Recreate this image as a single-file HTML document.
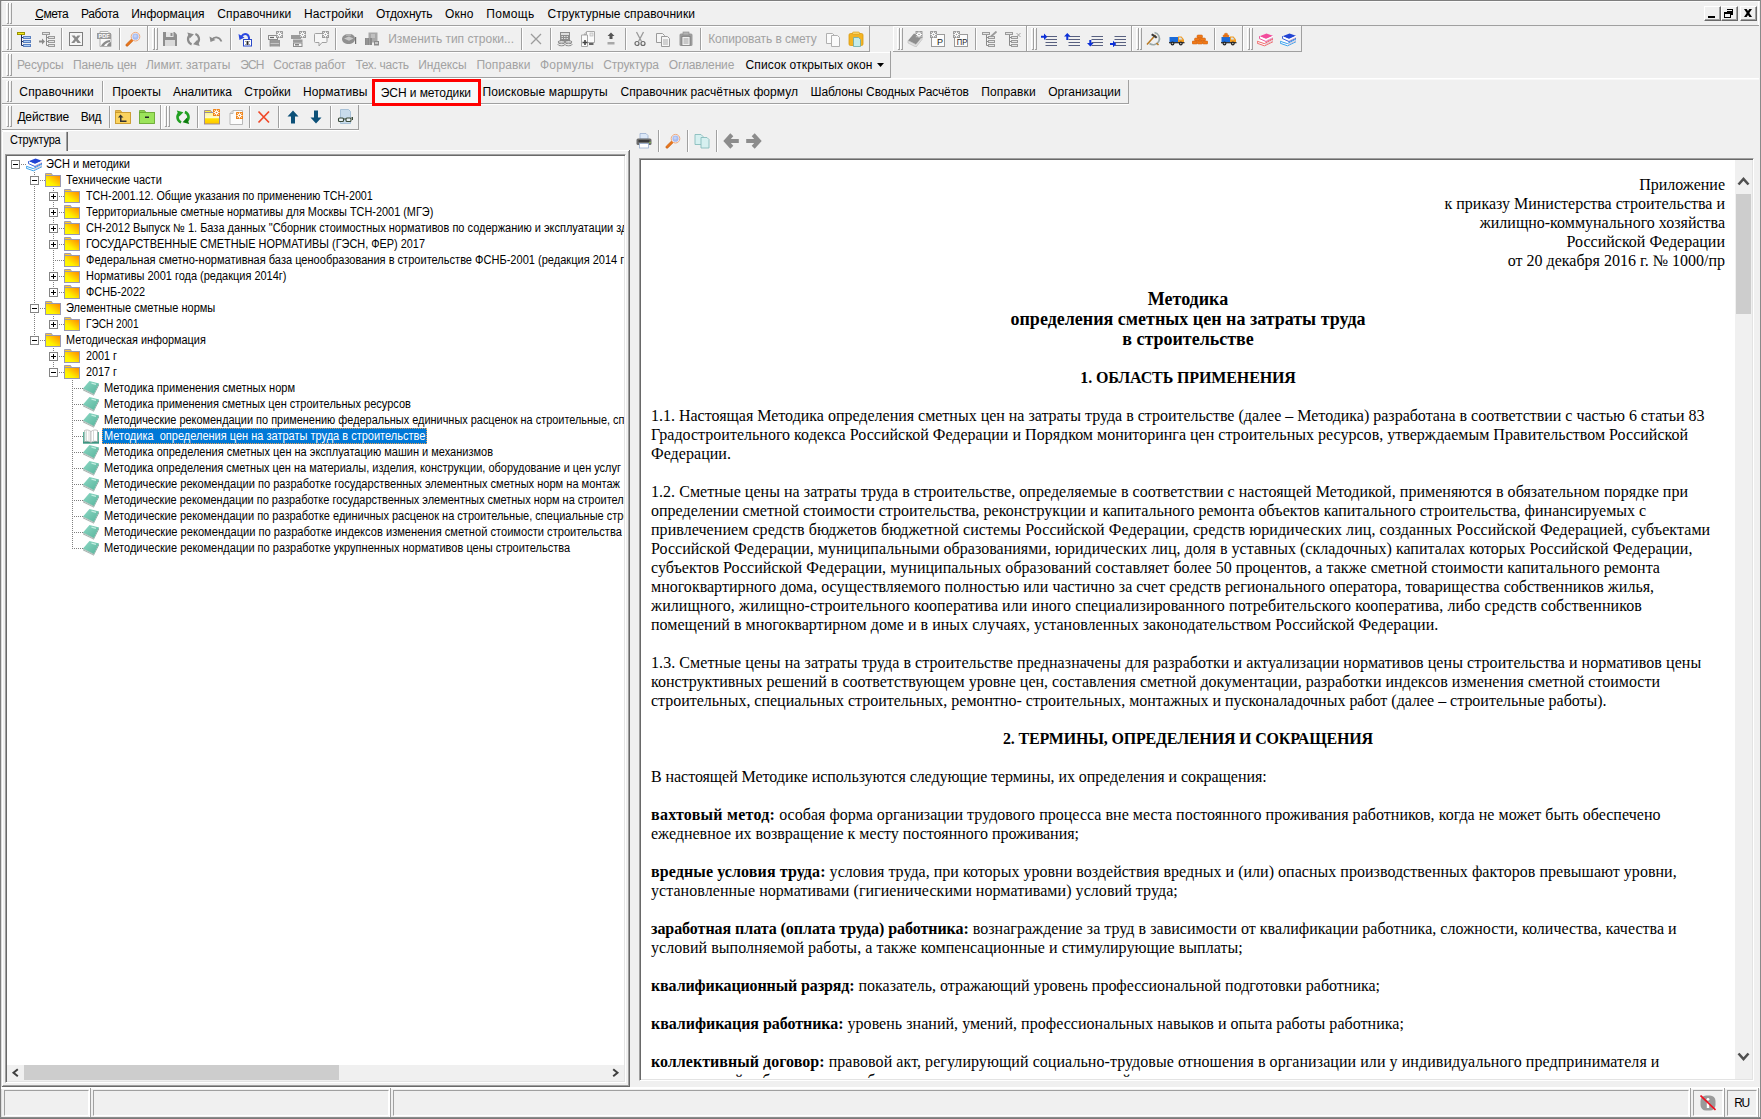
<!DOCTYPE html>
<html lang="ru"><head><meta charset="utf-8"><title>Смета</title><style>
html,body{margin:0;padding:0}
body{width:1761px;height:1119px;background:#f0f0f0;position:relative;overflow:hidden;font-family:"Liberation Sans",sans-serif;font-size:12px;color:#000}
.abs{position:absolute}
.ui{font-family:"Liberation Sans",sans-serif;font-size:12px;line-height:16px;white-space:pre;color:#000}
.dis{color:#a2a2a2}
.tree{font-family:"Liberation Sans",sans-serif;font-size:12px;line-height:16px;white-space:pre;color:#000;transform:scaleX(.917);transform-origin:0 0}
.sel{color:#fff}
.wbtn{width:17px;height:15px;box-sizing:border-box;background:#f0f0f0;border:1px solid;border-color:#fff #696969 #696969 #fff;box-shadow:inset -1px -1px 0 #a0a0a0}
.dv{width:1px;background-image:linear-gradient(#808080 50%,transparent 50%);background-size:1px 2px}
.dh{height:1px;background-image:linear-gradient(90deg,#808080 50%,transparent 50%);background-size:2px 1px}
#body{margin:15px 10px 0 10px;font-family:"Liberation Serif",serif;font-size:16px;line-height:19px;color:#000}
#body p{margin:0 0 19px 0}
#body p.r{text-align:right}
#body p.t{text-align:center;font-weight:bold;font-size:18px;line-height:20px}
#body p.h{text-align:center;font-weight:bold}
#body .ln{display:block;white-space:nowrap}
</style></head><body><svg width="0" height="0" style="position:absolute"><defs><linearGradient id="tf" x1="0" y1="1" x2="1" y2="0"><stop offset="0" stop-color="#ffff00"/><stop offset=".35" stop-color="#fff000"/><stop offset="1" stop-color="#ff8400"/></linearGradient><linearGradient id="tb" x1="0" y1="0" x2="1" y2="1"><stop offset="0" stop-color="#8cd8c4"/><stop offset="1" stop-color="#58b49c"/></linearGradient></defs></svg><div class="abs" style="left:0px;top:0px;width:1761px;height:1px;background:#7e7e7e;"></div><div class="abs" style="left:1px;top:1px;width:1759px;height:1px;background:#fbfbfb;"></div><div class="abs" style="left:0px;top:0px;width:1px;height:1119px;background:#7e7e7e;"></div><div class="abs" style="left:1px;top:1px;width:1px;height:1116px;background:#dcdcdc;"></div><div class="abs" style="left:1760px;top:0px;width:1px;height:1119px;background:#8a8a8a;"></div><div class="abs" style="left:0px;top:1118px;width:1761px;height:1px;background:#7a7a7a;"></div><div class="abs" style="left:0px;top:1117px;width:1761px;height:1px;background:#8c8c8c;"></div><div class="abs" style="left:6px;top:3px;width:1px;height:20px;background:#ffffff;"></div><div class="abs" style="left:8px;top:3px;width:1px;height:21px;background:#a0a0a0;"></div><div class="abs" style="left:6px;top:3px;width:2px;height:1px;background:#ffffff;"></div><div class="abs" style="left:7px;top:23px;width:2px;height:1px;background:#a0a0a0;"></div><div class="abs" style="left:9px;top:3px;width:1px;height:20px;background:#ffffff;"></div><div class="abs" style="left:11px;top:3px;width:1px;height:21px;background:#a0a0a0;"></div><div class="abs" style="left:9px;top:3px;width:2px;height:1px;background:#ffffff;"></div><div class="abs" style="left:10px;top:23px;width:2px;height:1px;background:#a0a0a0;"></div><span class="abs ui" style="left:35.2px;top:6px;letter-spacing:-0.427px;">Смета</span><span class="abs ui" style="left:81.0px;top:6px;letter-spacing:-0.352px;">Работа</span><span class="abs ui" style="left:131.2px;top:6px;letter-spacing:-0.008px;">Информация</span><span class="abs ui" style="left:217.3px;top:6px;letter-spacing:0.127px;">Справочники</span><span class="abs ui" style="left:304.1px;top:6px;letter-spacing:0.051px;">Настройки</span><span class="abs ui" style="left:376.0px;top:6px;letter-spacing:-0.218px;">Отдохнуть</span><span class="abs ui" style="left:445.0px;top:6px;letter-spacing:0.152px;">Окно</span><span class="abs ui" style="left:486.2px;top:6px;letter-spacing:0.323px;">Помощь</span><span class="abs ui" style="left:547.5px;top:6px;letter-spacing:0.085px;">Структурные справочники</span><div class="abs" style="left:35px;top:19px;width:8px;height:1px;background:#000;"></div><div class="abs" style="left:1758px;top:1px;width:1px;height:24px;background:#ffffff;"></div><div class="abs wbtn" style="left:1704px;top:6px"></div><div class="abs wbtn" style="left:1721px;top:6px"></div><div class="abs wbtn" style="left:1740px;top:6px"></div><div class="abs" style="left:1708px;top:16px;width:7px;height:2px;background:#000;"></div><svg class="abs" style="left:1724px;top:9px" width="10" height="10" viewBox="0 0 10 10"><path d="M3 0h6v6H7V3H3zM3 1v1h5V1z" fill="#000" fill-rule="evenodd"/><path d="M0 3h7v6H0zM1 5v3h5V5z" fill="#000" fill-rule="evenodd"/></svg><svg class="abs" style="left:1744px;top:9px" width="8" height="8" viewBox="0 0 8 7" preserveAspectRatio="none"><path d="M0 0h2.600L4 1.800 5.400 0H8L5.300 3.500 8 7H5.400L4 5.200 2.600 7H0L2.700 3.500z" fill="#000"/></svg><div class="abs" style="left:2px;top:25px;width:1757px;height:1px;background:#a0a0a0;"></div><div class="abs" style="left:2px;top:26px;width:145px;height:1px;background:#ffffff;"></div><div class="abs" style="left:2px;top:51px;width:146px;height:1px;background:#a0a0a0;"></div><div class="abs" style="left:147px;top:25px;width:1px;height:27px;background:#a0a0a0;"></div><div class="abs" style="left:2px;top:26px;width:1px;height:25px;background:#ffffff;"></div><div class="abs" style="left:148px;top:26px;width:721px;height:1px;background:#ffffff;"></div><div class="abs" style="left:148px;top:51px;width:722px;height:1px;background:#a0a0a0;"></div><div class="abs" style="left:869px;top:25px;width:1px;height:27px;background:#a0a0a0;"></div><div class="abs" style="left:148px;top:26px;width:1px;height:25px;background:#ffffff;"></div><div class="abs" style="left:893px;top:26px;width:133px;height:1px;background:#ffffff;"></div><div class="abs" style="left:893px;top:51px;width:134px;height:1px;background:#a0a0a0;"></div><div class="abs" style="left:1026px;top:25px;width:1px;height:27px;background:#a0a0a0;"></div><div class="abs" style="left:893px;top:26px;width:1px;height:25px;background:#ffffff;"></div><div class="abs" style="left:1027px;top:26px;width:104px;height:1px;background:#ffffff;"></div><div class="abs" style="left:1027px;top:51px;width:105px;height:1px;background:#a0a0a0;"></div><div class="abs" style="left:1131px;top:25px;width:1px;height:27px;background:#a0a0a0;"></div><div class="abs" style="left:1027px;top:26px;width:1px;height:25px;background:#ffffff;"></div><div class="abs" style="left:1132px;top:26px;width:110px;height:1px;background:#ffffff;"></div><div class="abs" style="left:1132px;top:51px;width:111px;height:1px;background:#a0a0a0;"></div><div class="abs" style="left:1242px;top:25px;width:1px;height:27px;background:#a0a0a0;"></div><div class="abs" style="left:1132px;top:26px;width:1px;height:25px;background:#ffffff;"></div><div class="abs" style="left:1243px;top:26px;width:58px;height:1px;background:#ffffff;"></div><div class="abs" style="left:1243px;top:51px;width:59px;height:1px;background:#a0a0a0;"></div><div class="abs" style="left:1301px;top:25px;width:1px;height:27px;background:#a0a0a0;"></div><div class="abs" style="left:1243px;top:26px;width:1px;height:25px;background:#ffffff;"></div><div class="abs" style="left:6px;top:28px;width:1px;height:21px;background:#ffffff;"></div><div class="abs" style="left:8px;top:28px;width:1px;height:22px;background:#a0a0a0;"></div><div class="abs" style="left:6px;top:28px;width:2px;height:1px;background:#ffffff;"></div><div class="abs" style="left:7px;top:49px;width:2px;height:1px;background:#a0a0a0;"></div><div class="abs" style="left:9px;top:28px;width:1px;height:21px;background:#ffffff;"></div><div class="abs" style="left:11px;top:28px;width:1px;height:22px;background:#a0a0a0;"></div><div class="abs" style="left:9px;top:28px;width:2px;height:1px;background:#ffffff;"></div><div class="abs" style="left:10px;top:49px;width:2px;height:1px;background:#a0a0a0;"></div><div class="abs" style="left:152px;top:28px;width:1px;height:21px;background:#ffffff;"></div><div class="abs" style="left:154px;top:28px;width:1px;height:22px;background:#a0a0a0;"></div><div class="abs" style="left:152px;top:28px;width:2px;height:1px;background:#ffffff;"></div><div class="abs" style="left:153px;top:49px;width:2px;height:1px;background:#a0a0a0;"></div><div class="abs" style="left:155px;top:28px;width:1px;height:21px;background:#ffffff;"></div><div class="abs" style="left:157px;top:28px;width:1px;height:22px;background:#a0a0a0;"></div><div class="abs" style="left:155px;top:28px;width:2px;height:1px;background:#ffffff;"></div><div class="abs" style="left:156px;top:49px;width:2px;height:1px;background:#a0a0a0;"></div><div class="abs" style="left:897px;top:28px;width:1px;height:21px;background:#ffffff;"></div><div class="abs" style="left:899px;top:28px;width:1px;height:22px;background:#a0a0a0;"></div><div class="abs" style="left:897px;top:28px;width:2px;height:1px;background:#ffffff;"></div><div class="abs" style="left:898px;top:49px;width:2px;height:1px;background:#a0a0a0;"></div><div class="abs" style="left:900px;top:28px;width:1px;height:21px;background:#ffffff;"></div><div class="abs" style="left:902px;top:28px;width:1px;height:22px;background:#a0a0a0;"></div><div class="abs" style="left:900px;top:28px;width:2px;height:1px;background:#ffffff;"></div><div class="abs" style="left:901px;top:49px;width:2px;height:1px;background:#a0a0a0;"></div><div class="abs" style="left:1031px;top:28px;width:1px;height:21px;background:#ffffff;"></div><div class="abs" style="left:1033px;top:28px;width:1px;height:22px;background:#a0a0a0;"></div><div class="abs" style="left:1031px;top:28px;width:2px;height:1px;background:#ffffff;"></div><div class="abs" style="left:1032px;top:49px;width:2px;height:1px;background:#a0a0a0;"></div><div class="abs" style="left:1034px;top:28px;width:1px;height:21px;background:#ffffff;"></div><div class="abs" style="left:1036px;top:28px;width:1px;height:22px;background:#a0a0a0;"></div><div class="abs" style="left:1034px;top:28px;width:2px;height:1px;background:#ffffff;"></div><div class="abs" style="left:1035px;top:49px;width:2px;height:1px;background:#a0a0a0;"></div><div class="abs" style="left:1136px;top:28px;width:1px;height:21px;background:#ffffff;"></div><div class="abs" style="left:1138px;top:28px;width:1px;height:22px;background:#a0a0a0;"></div><div class="abs" style="left:1136px;top:28px;width:2px;height:1px;background:#ffffff;"></div><div class="abs" style="left:1137px;top:49px;width:2px;height:1px;background:#a0a0a0;"></div><div class="abs" style="left:1139px;top:28px;width:1px;height:21px;background:#ffffff;"></div><div class="abs" style="left:1141px;top:28px;width:1px;height:22px;background:#a0a0a0;"></div><div class="abs" style="left:1139px;top:28px;width:2px;height:1px;background:#ffffff;"></div><div class="abs" style="left:1140px;top:49px;width:2px;height:1px;background:#a0a0a0;"></div><div class="abs" style="left:1247px;top:28px;width:1px;height:21px;background:#ffffff;"></div><div class="abs" style="left:1249px;top:28px;width:1px;height:22px;background:#a0a0a0;"></div><div class="abs" style="left:1247px;top:28px;width:2px;height:1px;background:#ffffff;"></div><div class="abs" style="left:1248px;top:49px;width:2px;height:1px;background:#a0a0a0;"></div><div class="abs" style="left:1250px;top:28px;width:1px;height:21px;background:#ffffff;"></div><div class="abs" style="left:1252px;top:28px;width:1px;height:22px;background:#a0a0a0;"></div><div class="abs" style="left:1250px;top:28px;width:2px;height:1px;background:#ffffff;"></div><div class="abs" style="left:1251px;top:49px;width:2px;height:1px;background:#a0a0a0;"></div><svg class="abs" style="left:17px;top:31px" width="16" height="16" viewBox="0 0 16 16"><rect x="0.5" y="1.5" width="7" height="2" fill="#f4ec1c" stroke="#9a9400"/>
<path d="M4.5 4V14.5H7M4.5 6.5H7M4.5 10.5H7" fill="none" stroke="#1f2f5f"/>
<rect x="6.5" y="5.5" width="7" height="2" fill="#a9cdf5" stroke="#5a80c0"/><rect x="6.5" y="9.5" width="7" height="2" fill="#a9cdf5" stroke="#5a80c0"/><rect x="6.5" y="13.5" width="7" height="2" fill="#a9cdf5" stroke="#5a80c0"/></svg><svg class="abs" style="left:39px;top:31px" width="16" height="16" viewBox="0 0 16 16"><rect x="3.5" y="1.5" width="7" height="2" fill="#e4e4e4" stroke="#9a9a9a"/>
<path d="M7.5 4V14.5H10M7.5 6.5H10M7.5 10.5H10" fill="none" stroke="#8a8a8a"/>
<rect x="9.5" y="5.5" width="6" height="2" fill="#e4e4e4" stroke="#9a9a9a"/><rect x="9.5" y="9.5" width="6" height="2" fill="#e4e4e4" stroke="#9a9a9a"/><rect x="9.5" y="13.5" width="6" height="2" fill="#e4e4e4" stroke="#9a9a9a"/>
<path d="M0 9.5h3v-2l3 3-3 3v-2H0z" fill="#8a8a8a"/></svg><div class="abs" style="left:61px;top:28px;width:1px;height:22px;background:#a0a0a0;"></div><div class="abs" style="left:62px;top:28px;width:1px;height:22px;background:#ffffff;"></div><svg class="abs" style="left:68px;top:31px" width="16" height="16" viewBox="0 0 16 16"><rect x="1.500" y="1.500" width="13" height="13" fill="#f6f6f6" stroke="#7e7e7e" stroke-width="1"/>
<path d="M3.500 4.500h3.200L8 6.300 9.500 4.500h3L9.700 8l3.300 4H9.500L8 9.800 6.300 12H3.200L6.500 8z" fill="#8a8a8a"/></svg><div class="abs" style="left:90px;top:28px;width:1px;height:22px;background:#a0a0a0;"></div><div class="abs" style="left:91px;top:28px;width:1px;height:22px;background:#ffffff;"></div><svg class="abs" style="left:97px;top:31px" width="16" height="16" viewBox="0 0 16 16"><path d="M3 0.5h8l3 3V15.5H3z" fill="#fafafa" stroke="#b0b0b0"/><rect x="0" y="2" width="14" height="6" fill="#9a9a9a"/>
<text x="7" y="7" font-family="Liberation Sans" font-weight="bold" font-size="5.5" fill="#fff" text-anchor="middle">PDF</text>
<path d="M4 15c2-4 5-5.5 9-6v2c-3 .5-5 2-6 4zM10 15c.5-2 2-3.5 4-4v4z" fill="#8c8c8c"/></svg><div class="abs" style="left:119px;top:28px;width:1px;height:22px;background:#a0a0a0;"></div><div class="abs" style="left:120px;top:28px;width:1px;height:22px;background:#ffffff;"></div><svg class="abs" style="left:125px;top:31px" width="16" height="16" viewBox="0 0 16 16"><path d="M1.2 13.2 7 7.6 8.6 9.2 2.9 14.9a1.2 1.2 0 0 1-1.7-1.7z" fill="#e8761c" stroke="#c05a10" stroke-width=".6"/>
<circle cx="10.5" cy="5.7" r="4.3" fill="#eef2fc" stroke="#f0a878" stroke-width="1"/><circle cx="10.5" cy="5.7" r="3.100" fill="#a8bcf0"/><circle cx="10.200" cy="5" r="1.600" fill="#c4d2f6"/></svg><svg class="abs" style="left:162px;top:31px" width="16" height="16" viewBox="0 0 16 16"><path d="M1 1h11.5L15 3.5V15H1z" fill="#8e8e8e"/><rect x="4" y="1" width="7.5" height="5" fill="#e6e6e6"/><rect x="8.5" y="2" width="2" height="3" fill="#8e8e8e"/><rect x="3" y="9" width="10" height="6" fill="#dadada"/></svg><svg class="abs" style="left:185px;top:31px" width="16" height="16" viewBox="0 0 16 16"><g transform="translate(.5 0)"><path d="M6.12 13.37A5.5 5.5 0 0 1 4.18 4.24" fill="none" stroke="#8c8c8c" stroke-width="2.2"/><path d="M1.800 1.400 8.400 3.200 4.200 7.600z" fill="#8c8c8c"/><g transform="rotate(180 8 8.2)"><path d="M6.12 13.37A5.5 5.5 0 0 1 4.18 4.24" fill="none" stroke="#8c8c8c" stroke-width="2.2"/><path d="M1.800 1.400 8.400 3.200 4.200 7.600z" fill="#8c8c8c"/></g></g></svg><svg class="abs" style="left:208px;top:31px" width="16" height="16" viewBox="0 0 16 16"><path d="M4 8.5C6 5.5 11 5 13.5 10.5" fill="none" stroke="#8c8c8c" stroke-width="1.8"/><path d="M1.5 5.5 2.5 11 7.5 9z" fill="#8c8c8c"/></svg><div class="abs" style="left:230px;top:28px;width:1px;height:22px;background:#a0a0a0;"></div><div class="abs" style="left:231px;top:28px;width:1px;height:22px;background:#ffffff;"></div><svg class="abs" style="left:238px;top:31px" width="16" height="16" viewBox="0 0 16 16"><path d="M3.5 5.5C6 1.5 11.5 2.5 11 8.5" fill="none" stroke="#2a48e0" stroke-width="2"/><path d="M0.5 3 1.5 9 6.5 6.5z" fill="#2a48e0"/>
<rect x="5.5" y="8.500" width="8" height="6.500" fill="#fff" stroke="#2a48c8"/><path d="M7.5 10 11.5 14M11.5 10 7.500 14M9.500 10v4" stroke="#222" stroke-width=".9"/></svg><div class="abs" style="left:260px;top:28px;width:1px;height:22px;background:#a0a0a0;"></div><div class="abs" style="left:261px;top:28px;width:1px;height:22px;background:#ffffff;"></div><svg class="abs" style="left:267px;top:31px" width="16" height="16" viewBox="0 0 16 16"><rect x="1.500" y="4.500" width="9" height="4" fill="#f4f4f4" stroke="#8c8c8c"/><path d="M3 6.500h4" stroke="#666" stroke-width="1.200"/><rect x="3" y="9" width="9.500" height="3" fill="#9a9a9a"/><rect x="3" y="12.500" width="9.500" height="3" fill="#9a9a9a"/><path d="M3 9v6.500M12.500 9v6.500" stroke="#8a8a8a" stroke-width=".8"/><rect x="9.0" y="0.0" width="7" height="7" rx=".6" fill="#9a9a9a"/><path d="M9.5 3.5h6M12.5 0.5v6M10.3 1.2999999999999998l4.400 4.400M14.7 1.2999999999999998l-4.400 4.400" stroke="#fff" stroke-width=".9"/><circle cx="12.5" cy="3.5" r="1.900" fill="#fff"/><circle cx="12.5" cy="3.5" r=".8" fill="#9a9a9a"/></svg><svg class="abs" style="left:290px;top:31px" width="16" height="16" viewBox="0 0 16 16"><rect x="1" y="4" width="10" height="4" fill="#9a9a9a"/><rect x="3" y="8.500" width="9.500" height="3" fill="#9a9a9a"/><rect x="3.500" y="12" width="8.500" height="3.500" fill="#f4f4f4" stroke="#8c8c8c"/><path d="M5 13.800h4" stroke="#666" stroke-width="1.200"/><rect x="9.0" y="0.0" width="7" height="7" rx=".6" fill="#9a9a9a"/><path d="M9.5 3.5h6M12.5 0.5v6M10.3 1.2999999999999998l4.400 4.400M14.7 1.2999999999999998l-4.400 4.400" stroke="#fff" stroke-width=".9"/><circle cx="12.5" cy="3.5" r="1.900" fill="#fff"/><circle cx="12.5" cy="3.5" r=".8" fill="#9a9a9a"/></svg><svg class="abs" style="left:313px;top:31px" width="16" height="16" viewBox="0 0 16 16"><path d="M2.500 2.500h10.500a1 1 0 0 1 1 1V10.500a1 1 0 0 1-1 1H9L6 15V11.500H2.500a1 1 0 0 1-1-1V3.500a1 1 0 0 1 1-1z" fill="#f6f6f6" stroke="#a0a0a0" stroke-linejoin="round"/><rect x="9.0" y="0.0" width="7" height="7" rx=".6" fill="#9a9a9a"/><path d="M9.5 3.5h6M12.5 0.5v6M10.3 1.2999999999999998l4.400 4.400M14.7 1.2999999999999998l-4.400 4.400" stroke="#fff" stroke-width=".9"/><circle cx="12.5" cy="3.5" r="1.900" fill="#fff"/><circle cx="12.5" cy="3.5" r=".8" fill="#9a9a9a"/></svg><div class="abs" style="left:335px;top:28px;width:1px;height:22px;background:#a0a0a0;"></div><div class="abs" style="left:336px;top:28px;width:1px;height:22px;background:#ffffff;"></div><svg class="abs" style="left:341px;top:31px" width="16" height="16" viewBox="0 0 16 16"><path d="M1 8c0-3 3-5 7-5s6 2 6 5-3 5-6.500 5S1 11 1 8z" fill="#909090"/><path d="M3 7.500 8 5.500l4.500 2L8 9.800z" fill="#c8c8c8"/><rect x="5" y="3" width="5" height="2" fill="#b0b0b0"/><rect x="14" y="6" width="1.200" height="7" fill="#707070"/></svg><svg class="abs" style="left:364px;top:31px" width="16" height="16" viewBox="0 0 16 16"><rect x="4.500" y="1.500" width="9" height="10" fill="#a8a8a8"/><path d="M7 4h4M7 6h4" stroke="#d8d8d8"/><rect x="1" y="7" width="7" height="7" fill="#8a8a8a"/><path d="M3 7v7M5.500 7v7" stroke="#a8a8a8" stroke-width=".7"/><rect x="10" y="10" width="5" height="4.500" fill="#8a8a8a"/><rect x="11" y="11" width="3" height="2" fill="#c8c8c8"/></svg><div class="abs" style="left:521px;top:28px;width:1px;height:22px;background:#a0a0a0;"></div><div class="abs" style="left:522px;top:28px;width:1px;height:22px;background:#ffffff;"></div><svg class="abs" style="left:528px;top:31px" width="16" height="16" viewBox="0 0 16 16"><path d="M3 3 13 13M13 3 3 13" stroke="#9c9c9c" stroke-width="1.300"/></svg><div class="abs" style="left:550px;top:28px;width:1px;height:22px;background:#a0a0a0;"></div><div class="abs" style="left:551px;top:28px;width:1px;height:22px;background:#ffffff;"></div><svg class="abs" style="left:557px;top:31px" width="16" height="16" viewBox="0 0 16 16"><rect x="3" y="1" width="10" height="9" fill="#8c8c8c"/><rect x="4" y="2" width="8" height="2" fill="#ddd"/><path d="M4.500 5.500h7M4.500 7.500h7" stroke="#ddd" stroke-dasharray="1.500 1"/>
<ellipse cx="4.500" cy="11" rx="3.500" ry="1.300" fill="#e8e8e8" stroke="#777" stroke-width=".8"/><ellipse cx="4.500" cy="13.500" rx="3.500" ry="1.300" fill="#e8e8e8" stroke="#777" stroke-width=".8"/><ellipse cx="11.500" cy="11" rx="3.500" ry="1.300" fill="#e8e8e8" stroke="#777" stroke-width=".8"/><ellipse cx="11.500" cy="13.500" rx="3.500" ry="1.300" fill="#e8e8e8" stroke="#777" stroke-width=".8"/></svg><svg class="abs" style="left:580px;top:31px" width="16" height="16" viewBox="0 0 16 16"><path d="M6.500 0.500h8v11h-8z" fill="#fafafa" stroke="#a8a8a8"/><path d="M4 3.500 6.500 1v2.500zM1.500 4h6v11.500h-6z" fill="#fafafa" stroke="#a8a8a8"/><rect x="10" y="2" width="3" height="3" fill="#e8e8e8" stroke="#b0b0b0" stroke-width=".6"/>
<path d="M2.500 11.500h5M5 9v5" stroke="#444" stroke-width="1.600"/><path d="M9 13h4.500" stroke="#444" stroke-width="1.600"/></svg><svg class="abs" style="left:603px;top:31px" width="16" height="16" viewBox="0 0 16 16"><path d="M8 1.500 11.500 5H9.500V8h-3V5H4.500z" fill="#555"/><rect x="4.500" y="11" width="7" height="2.500" fill="#a8a8a8"/></svg><div class="abs" style="left:625px;top:28px;width:1px;height:22px;background:#a0a0a0;"></div><div class="abs" style="left:626px;top:28px;width:1px;height:22px;background:#ffffff;"></div><svg class="abs" style="left:632px;top:31px" width="16" height="16" viewBox="0 0 16 16"><path d="M4.500 1 9.500 10.500M11.500 1 6.500 10.500" stroke="#9a9a9a" stroke-width="1.300"/><circle cx="5" cy="12.500" r="2" fill="none" stroke="#6a6a6a" stroke-width="1.200"/><circle cx="11" cy="12.500" r="2" fill="none" stroke="#6a6a6a" stroke-width="1.200"/></svg><svg class="abs" style="left:655px;top:31px" width="16" height="16" viewBox="0 0 16 16"><path d="M1.500 2.500h6l2 2v7h-8z" fill="#f6f6f6" stroke="#9a9a9a"/><path d="M6.500 5.500h6l2 2V15.500h-8z" fill="#f6f6f6" stroke="#9a9a9a"/><path d="M8 9h5M8 11h5M8 13h5" stroke="#9a9a9a" stroke-width=".8"/></svg><svg class="abs" style="left:678px;top:31px" width="16" height="16" viewBox="0 0 16 16"><rect x="1.500" y="2.500" width="13" height="12.500" rx="1.500" fill="#9c9c9c"/><rect x="5" y="1" width="6" height="3" fill="#b4b4b4" stroke="#888" stroke-width=".6"/><rect x="4" y="5.500" width="8" height="9" fill="#f0f0f0" stroke="#777" stroke-width=".7"/><path d="M5.500 8h5M5.500 10h5M5.500 12h5" stroke="#8c8c8c" stroke-width=".8"/></svg><div class="abs" style="left:700px;top:28px;width:1px;height:22px;background:#a0a0a0;"></div><div class="abs" style="left:701px;top:28px;width:1px;height:22px;background:#ffffff;"></div><svg class="abs" style="left:825px;top:31px" width="16" height="16" viewBox="0 0 16 16"><path d="M1.500 2.500h6l2 2v8h-8z" fill="#fbfbfb" stroke="#b0b0b0"/><path d="M6.500 4.500h6l2 2V15.500h-8z" fill="#fbfbfb" stroke="#b0b0b0"/></svg><svg class="abs" style="left:848px;top:31px" width="16" height="16" viewBox="0 0 16 16"><rect x="1" y="2.500" width="14" height="12" rx="1.500" fill="#f3b424" stroke="#d89a10" stroke-width=".8"/><rect x="4.500" y="1" width="7" height="2.500" rx="1" fill="#f8d060" stroke="#d89a10" stroke-width=".6"/><path d="M5.500 6.500h5l2 2V15.500h-7z" fill="#c4ecec" stroke="#6aa8a8" stroke-width=".8"/></svg><svg class="abs" style="left:907px;top:31px" width="16" height="16" viewBox="0 0 16 16"><path d="M1 9.500 7 2.500l8 3.500-6 7.500z" fill="#8e8e8e"/><path d="M1 9.500v2.500l8 4 6-7.500V6L9 13.500z" fill="#e2e2e2" stroke="#aaa" stroke-width=".5"/><rect x="8.5" y="0.0" width="7" height="7" rx=".6" fill="#9a9a9a"/><path d="M9 3.5h6M12 0.5v6M9.8 1.2999999999999998l4.400 4.400M14.2 1.2999999999999998l-4.400 4.400" stroke="#fff" stroke-width=".9"/><circle cx="12" cy="3.5" r="1.900" fill="#fff"/><circle cx="12" cy="3.5" r=".8" fill="#9a9a9a"/></svg><svg class="abs" style="left:930px;top:31px" width="16" height="16" viewBox="0 0 16 16"><rect x="1.500" y="3.500" width="13" height="12" fill="#fcfcfc" stroke="#9a9a9a"/><rect x="0.0" y="0.0" width="7" height="7" rx=".6" fill="#9a9a9a"/><path d="M0.5 3.5h6M3.5 0.5v6M1.2999999999999998 1.2999999999999998l4.400 4.400M5.7 1.2999999999999998l-4.400 4.400" stroke="#fff" stroke-width=".9"/><circle cx="3.5" cy="3.5" r="1.900" fill="#fff"/><circle cx="3.5" cy="3.5" r=".8" fill="#9a9a9a"/><text x="10" y="14" font-family="Liberation Sans" font-size="9" fill="#1a1a1a" text-anchor="middle">Р</text></svg><svg class="abs" style="left:953px;top:31px" width="16" height="16" viewBox="0 0 16 16"><rect x="1.500" y="3.500" width="13" height="12" fill="#fcfcfc" stroke="#9a9a9a"/><rect x="0.0" y="0.0" width="7" height="7" rx=".6" fill="#9a9a9a"/><path d="M0.5 3.5h6M3.5 0.5v6M1.2999999999999998 1.2999999999999998l4.400 4.400M5.7 1.2999999999999998l-4.400 4.400" stroke="#fff" stroke-width=".9"/><circle cx="3.5" cy="3.5" r="1.900" fill="#fff"/><circle cx="3.5" cy="3.5" r=".8" fill="#9a9a9a"/><text x="9" y="14" font-family="Liberation Sans" font-size="9" fill="#1a1a1a" text-anchor="middle" textLength="10.500" lengthAdjust="spacingAndGlyphs">ПР</text></svg><div class="abs" style="left:975px;top:28px;width:1px;height:22px;background:#a0a0a0;"></div><div class="abs" style="left:976px;top:28px;width:1px;height:22px;background:#ffffff;"></div><svg class="abs" style="left:982px;top:31px" width="16" height="16" viewBox="0 0 16 16"><rect x="0.500" y="1.500" width="7" height="2" fill="#e4e4e4" stroke="#9a9a9a"/><path d="M4.500 4V14.500H7M4.500 6.500H7M4.500 10.500H7" fill="none" stroke="#8a8a8a"/>
<rect x="6.500" y="5.500" width="6" height="2" fill="#e4e4e4" stroke="#9a9a9a"/><rect x="6.500" y="9.500" width="6" height="2" fill="#e4e4e4" stroke="#9a9a9a"/><rect x="6.500" y="13.500" width="6" height="2" fill="#e4e4e4" stroke="#9a9a9a"/><path d="M9 5.500 14.500 0.500" stroke="#9a9a9a" stroke-width="1.800"/></svg><svg class="abs" style="left:1005px;top:31px" width="16" height="16" viewBox="0 0 16 16"><rect x="0.500" y="1.500" width="7" height="2" fill="#e4e4e4" stroke="#9a9a9a"/><path d="M4.500 4V14.500H7M4.500 6.500H7M4.500 10.500H7" fill="none" stroke="#8a8a8a"/>
<rect x="6.500" y="5.500" width="6" height="2" fill="#e4e4e4" stroke="#9a9a9a"/><rect x="6.500" y="9.500" width="6" height="2" fill="#e4e4e4" stroke="#9a9a9a"/><rect x="6.500" y="13.500" width="6" height="2" fill="#e4e4e4" stroke="#9a9a9a"/><path d="M11.500 2 15.500 6M15.500 2 11.500 6" stroke="#9a9a9a" stroke-width=".9"/></svg><svg class="abs" style="left:1041px;top:31px" width="16" height="16" viewBox="0 0 16 16"><path d="M4.500 5.500h11.500M4.500 8.500h11.500M4.500 11.500h11.500M4.500 14.500h11.500" stroke="#586080" stroke-width="1"/><path d="M0 4.800h3v-2.300l3.300 3.300-3.300 3.300v-2.300h-3z" fill="#0c30d8"/></svg><svg class="abs" style="left:1064px;top:31px" width="16" height="16" viewBox="0 0 16 16"><path d="M4.500 5.500h11.500M4.500 8.500h11.500M4.500 11.500h11.500M4.500 14.500h11.500" stroke="#586080" stroke-width="1"/><path d="M2.300 9v-3.500h-2.300l3.300-3.500 3.300 3.500h-2.300v3.500z" fill="#0c30d8"/></svg><svg class="abs" style="left:1087px;top:31px" width="16" height="16" viewBox="0 0 16 16"><path d="M4.500 5.500h11.500M4.500 8.500h11.500M4.500 11.500h11.500M4.500 14.500h11.500" stroke="#586080" stroke-width="1"/><path d="M2.300 9v3h-2.300l3.300 3.500 3.300-3.500h-2.300v-3z" fill="#0c30d8"/></svg><svg class="abs" style="left:1110px;top:31px" width="16" height="16" viewBox="0 0 16 16"><path d="M4.500 5.500h11.500M4.500 8.500h11.500M4.500 11.500h11.500M4.500 14.500h11.500" stroke="#586080" stroke-width="1"/><path d="M0 12h3v-2.300l3.300 3.300-3.300 3.300v-2.300h-3z" fill="#0c30d8"/></svg><svg class="abs" style="left:1146px;top:31px" width="16" height="16" viewBox="0 0 16 16"><path d="M8.500 1.500A6.200 6.200 0 1 1 3.500 12.500" fill="none" stroke="#9aa8a8" stroke-width="1.600"/><path d="M1 13.500 9.500 4" stroke="#b87820" stroke-width="1.500"/><path d="M6.500 2.500 11.500 6 10 7.500 5 4z" fill="#3a3a3a"/><path d="M12.500 14 10.500 12" stroke="#b87820" stroke-width="1.500"/></svg><svg class="abs" style="left:1169px;top:31px" width="16" height="16" viewBox="0 0 16 16"><path d="M0.500 6h8.500v5.500H0.500z" fill="#1a6ad8"/><path d="M9 5.500h3.500l2.500 3v3H9z" fill="#f09a20"/><path d="M10 6.500h2l1.500 2H10z" fill="#cfe4f8"/><rect x="0" y="11" width="15.500" height="1.300" fill="#333"/><circle cx="3.500" cy="12.500" r="1.900" fill="#222"/><circle cx="11.800" cy="12.500" r="1.900" fill="#222"/><circle cx="3.500" cy="12.500" r=".8" fill="#bbb"/><circle cx="11.800" cy="12.500" r=".8" fill="#bbb"/></svg><svg class="abs" style="left:1192px;top:31px" width="16" height="16" viewBox="0 0 16 16"><g fill="#f07a18" stroke="#c85a08" stroke-width=".5"><rect x="5" y="4" width="5.500" height="3" rx="1"/><rect x="2.500" y="7" width="5.500" height="3" rx="1"/><rect x="8" y="7" width="5.500" height="3" rx="1"/><rect x="0" y="10" width="5.300" height="3" rx="1"/><rect x="5.300" y="10" width="5.300" height="3" rx="1"/><rect x="10.600" y="10" width="5.300" height="3" rx="1"/></g></svg><div class="abs" style="left:1214px;top:28px;width:1px;height:22px;background:#a0a0a0;"></div><div class="abs" style="left:1215px;top:28px;width:1px;height:22px;background:#ffffff;"></div><svg class="abs" style="left:1221px;top:31px" width="16" height="16" viewBox="0 0 16 16"><path d="M0.500 6h8.500v5.500H0.500z" fill="#1a6ad8"/><path d="M9 5.500h3.500l2.500 3v3H9z" fill="#f09a20"/><path d="M10 6.500h2l1.500 2H10z" fill="#cfe4f8"/><rect x="0" y="11" width="15.500" height="1.300" fill="#333"/><circle cx="3.500" cy="12.500" r="1.900" fill="#222"/><circle cx="11.800" cy="12.500" r="1.900" fill="#222"/><circle cx="3.500" cy="12.500" r=".8" fill="#bbb"/><circle cx="11.800" cy="12.500" r=".8" fill="#bbb"/><g fill="#f07a18" stroke="#c85a08" stroke-width=".4"><rect x="2" y="4" width="3" height="2" rx=".8"/><rect x="5" y="4" width="3" height="2" rx=".8"/><rect x="3.500" y="2.300" width="3" height="2" rx=".8"/></g></svg><svg class="abs" style="left:1257px;top:31px" width="16" height="16" viewBox="0 0 16 16"><path d="M0.300 10.300 4 8.300 10 10.800 16.200 8v2.600L7.500 14.800 0.300 12.300z" fill="#fdfdff"/><path d="M0.300 10.300 7.300 12.600 16.200 8M0.300 10.300v2L7.500 14.800 16.200 10.600V8" fill="none" stroke="#f06868" stroke-width="1"/><path d="M8 13.500 16 9.700" stroke="#d8b8c8" stroke-width=".9"/>
<path d="M2.500 5.200 9.500 2.600 16 4.800 9 8z" fill="#f24c9c"/><path d="M2.500 5.200 9 8 16 4.800V7.200L9 10.500 2.500 7.600z" fill="#fff"/><path d="M2.500 5.200V7.600L9 10.500 16 7.200" fill="none" stroke="#e84890" stroke-width=".9"/><path d="M9.500 9.600 16 6.500" stroke="#d8b8c8" stroke-width=".8"/></svg><svg class="abs" style="left:1280px;top:31px" width="16" height="16" viewBox="0 0 16 16"><path d="M0.300 10.300 4 8.300 10 10.800 16.200 8v2.600L7.500 14.800 0.300 12.300z" fill="#fdfdff"/><path d="M0.300 10.300 7.300 12.600 16.200 8M0.300 10.300v2L7.500 14.800 16.200 10.600V8" fill="none" stroke="#38a0ec" stroke-width="1"/><path d="M8 13.500 16 9.700" stroke="#d8b8c8" stroke-width=".9"/>
<path d="M2.500 5.200 9.500 2.600 16 4.800 9 8z" fill="#2244d4"/><path d="M2.500 5.200 9 8 16 4.800V7.200L9 10.500 2.500 7.600z" fill="#fff"/><path d="M2.500 5.200V7.600L9 10.500 16 7.200" fill="none" stroke="#2850d0" stroke-width=".9"/><path d="M9.500 9.600 16 6.500" stroke="#d8b8c8" stroke-width=".8"/></svg><span class="abs ui dis" style="left:388.2px;top:31px;letter-spacing:-0.023px;">Изменить тип строки...</span><span class="abs ui dis" style="left:708.2px;top:31px;letter-spacing:-0.067px;">Копировать в смету</span><div class="abs" style="left:2px;top:52px;width:888px;height:1px;background:#ffffff;"></div><div class="abs" style="left:2px;top:77px;width:889px;height:1px;background:#a0a0a0;"></div><div class="abs" style="left:890px;top:51px;width:1px;height:27px;background:#a0a0a0;"></div><div class="abs" style="left:2px;top:52px;width:1px;height:25px;background:#ffffff;"></div><div class="abs" style="left:6px;top:54px;width:1px;height:21px;background:#ffffff;"></div><div class="abs" style="left:8px;top:54px;width:1px;height:22px;background:#a0a0a0;"></div><div class="abs" style="left:6px;top:54px;width:2px;height:1px;background:#ffffff;"></div><div class="abs" style="left:7px;top:75px;width:2px;height:1px;background:#a0a0a0;"></div><div class="abs" style="left:9px;top:54px;width:1px;height:21px;background:#ffffff;"></div><div class="abs" style="left:11px;top:54px;width:1px;height:22px;background:#a0a0a0;"></div><div class="abs" style="left:9px;top:54px;width:2px;height:1px;background:#ffffff;"></div><div class="abs" style="left:10px;top:75px;width:2px;height:1px;background:#a0a0a0;"></div><span class="abs ui dis" style="left:17.0px;top:57px;letter-spacing:-0.104px;">Ресурсы</span><span class="abs ui dis" style="left:73.0px;top:57px;letter-spacing:-0.123px;">Панель цен</span><span class="abs ui dis" style="left:146.0px;top:57px;letter-spacing:-0.042px;">Лимит. затраты</span><span class="abs ui dis" style="left:240.2px;top:57px;letter-spacing:-0.923px;">ЭСН</span><span class="abs ui dis" style="left:273.3px;top:57px;letter-spacing:-0.243px;">Состав работ</span><span class="abs ui dis" style="left:355.4px;top:57px;letter-spacing:-0.302px;">Тех. часть</span><span class="abs ui dis" style="left:418.2px;top:57px;letter-spacing:-0.077px;">Индексы</span><span class="abs ui dis" style="left:476.4px;top:57px;letter-spacing:0.077px;">Поправки</span><span class="abs ui dis" style="left:540.0px;top:57px;letter-spacing:0.226px;">Формулы</span><span class="abs ui dis" style="left:603.2px;top:57px;letter-spacing:-0.149px;">Структура</span><span class="abs ui dis" style="left:668.8px;top:57px;letter-spacing:-0.151px;">Оглавление</span><span class="abs ui" style="left:745.5px;top:57px;letter-spacing:0.123px;">Список открытых окон</span><svg class="abs" style="left:877px;top:63px" width="7" height="4" viewBox="0 0 7 4"><path d="M0 0h7L3.500 4z" fill="#000"/></svg><div class="abs" style="left:2px;top:78px;width:1757px;height:1px;background:#ffffff;"></div><div class="abs" style="left:2px;top:79px;width:1757px;height:1px;background:#f8f8f8;"></div><div class="abs" style="left:2px;top:103px;width:1127px;height:1px;background:#a0a0a0;"></div><div class="abs" style="left:1128px;top:80px;width:1px;height:24px;background:#a0a0a0;"></div><div class="abs" style="left:2px;top:104px;width:1127px;height:1px;background:#ffffff;"></div><div class="abs" style="left:6px;top:81px;width:1px;height:20px;background:#ffffff;"></div><div class="abs" style="left:8px;top:81px;width:1px;height:21px;background:#a0a0a0;"></div><div class="abs" style="left:6px;top:81px;width:2px;height:1px;background:#ffffff;"></div><div class="abs" style="left:7px;top:101px;width:2px;height:1px;background:#a0a0a0;"></div><div class="abs" style="left:9px;top:81px;width:1px;height:20px;background:#ffffff;"></div><div class="abs" style="left:11px;top:81px;width:1px;height:21px;background:#a0a0a0;"></div><div class="abs" style="left:9px;top:81px;width:2px;height:1px;background:#ffffff;"></div><div class="abs" style="left:10px;top:101px;width:2px;height:1px;background:#a0a0a0;"></div><div class="abs" style="left:372px;top:79px;width:103px;height:21px;border:3px solid #ff0000;background:#f8f8f8"></div><span class="abs ui" style="left:19.3px;top:84px;letter-spacing:0.163px;">Справочники</span><span class="abs ui" style="left:112.3px;top:84px;letter-spacing:0.078px;">Проекты</span><span class="abs ui" style="left:173.0px;top:84px;letter-spacing:-0.067px;">Аналитика</span><span class="abs ui" style="left:244.2px;top:84px;letter-spacing:0.047px;">Стройки</span><span class="abs ui" style="left:303.0px;top:84px;letter-spacing:0.058px;">Нормативы</span><span class="abs ui" style="left:380.8px;top:85px;letter-spacing:-0.078px;">ЭСН и методики</span><span class="abs ui" style="left:482.4px;top:84px;letter-spacing:0.136px;">Поисковые маршруты</span><span class="abs ui" style="left:620.5px;top:84px;letter-spacing:0.066px;">Справочник расчётных формул</span><span class="abs ui" style="left:810.5px;top:84px;letter-spacing:-0.104px;">Шаблоны Сводных Расчётов</span><span class="abs ui" style="left:981.2px;top:84px;letter-spacing:0.139px;">Поправки</span><span class="abs ui" style="left:1048.2px;top:84px;letter-spacing:0.001px;">Организации</span><div class="abs" style="left:102px;top:81px;width:1px;height:21px;background:#a0a0a0;"></div><div class="abs" style="left:103px;top:81px;width:1px;height:21px;background:#ffffff;"></div><div class="abs" style="left:2px;top:129px;width:159px;height:1px;background:#a0a0a0;"></div><div class="abs" style="left:160px;top:105px;width:1px;height:25px;background:#a0a0a0;"></div><div class="abs" style="left:161px;top:129px;width:198px;height:1px;background:#a0a0a0;"></div><div class="abs" style="left:358px;top:105px;width:1px;height:25px;background:#a0a0a0;"></div><div class="abs" style="left:161px;top:105px;width:1px;height:24px;background:#ffffff;"></div><div class="abs" style="left:2px;top:130px;width:357px;height:1px;background:#ffffff;"></div><div class="abs" style="left:6px;top:106px;width:1px;height:20px;background:#ffffff;"></div><div class="abs" style="left:8px;top:106px;width:1px;height:21px;background:#a0a0a0;"></div><div class="abs" style="left:6px;top:106px;width:2px;height:1px;background:#ffffff;"></div><div class="abs" style="left:7px;top:126px;width:2px;height:1px;background:#a0a0a0;"></div><div class="abs" style="left:9px;top:106px;width:1px;height:20px;background:#ffffff;"></div><div class="abs" style="left:11px;top:106px;width:1px;height:21px;background:#a0a0a0;"></div><div class="abs" style="left:9px;top:106px;width:2px;height:1px;background:#ffffff;"></div><div class="abs" style="left:10px;top:126px;width:2px;height:1px;background:#a0a0a0;"></div><div class="abs" style="left:164px;top:106px;width:1px;height:20px;background:#ffffff;"></div><div class="abs" style="left:166px;top:106px;width:1px;height:21px;background:#a0a0a0;"></div><div class="abs" style="left:164px;top:106px;width:2px;height:1px;background:#ffffff;"></div><div class="abs" style="left:165px;top:126px;width:2px;height:1px;background:#a0a0a0;"></div><div class="abs" style="left:167px;top:106px;width:1px;height:20px;background:#ffffff;"></div><div class="abs" style="left:169px;top:106px;width:1px;height:21px;background:#a0a0a0;"></div><div class="abs" style="left:167px;top:106px;width:2px;height:1px;background:#ffffff;"></div><div class="abs" style="left:168px;top:126px;width:2px;height:1px;background:#a0a0a0;"></div><span class="abs ui" style="left:17.4px;top:109px;letter-spacing:-0.146px;">Действие</span><span class="abs ui" style="left:80.7px;top:109px;letter-spacing:-0.473px;">Вид</span><div class="abs" style="left:109px;top:106px;width:1px;height:22px;background:#a0a0a0;"></div><div class="abs" style="left:110px;top:106px;width:1px;height:22px;background:#ffffff;"></div><svg class="abs" style="left:115px;top:109px" width="16" height="16" viewBox="0 0 16 16"><path d="M0.500 3.500V1.500h5l1.500 2z" fill="#e8b84a" stroke="#c89828" stroke-width=".8"/><rect x="0.500" y="3.500" width="15" height="11" fill="#fbd35e" stroke="#c89828" stroke-width=".9"/><path d="M5.500 5.500 8.500 8.500h-2v3h5v1.500h-6.500V8.500h-2z" fill="#333"/></svg><svg class="abs" style="left:139px;top:109px" width="16" height="16" viewBox="0 0 16 16"><path d="M0.500 3.500V1.500h5l1.500 2z" fill="#8ed050" stroke="#68a830" stroke-width=".8"/><rect x="0.500" y="3.500" width="15" height="11" fill="#9be35a" stroke="#68a830" stroke-width=".9"/><rect x="6" y="7.500" width="4" height="1.500" fill="#222"/></svg><svg class="abs" style="left:175px;top:109px" width="16" height="16" viewBox="0 0 16 16"><path d="M6.12 13.37A5.5 5.5 0 0 1 4.18 4.24" fill="none" stroke="#22a022" stroke-width="2.6"/><path d="M1.800 1.400 8.400 3.200 4.200 7.600z" fill="#22a022"/><g transform="rotate(180 8 8.2)"><path d="M6.12 13.37A5.5 5.5 0 0 1 4.18 4.24" fill="none" stroke="#22a022" stroke-width="2.6"/><path d="M1.800 1.400 8.400 3.200 4.200 7.600z" fill="#0c7c0c"/></g></svg><div class="abs" style="left:197px;top:106px;width:1px;height:22px;background:#a0a0a0;"></div><div class="abs" style="left:198px;top:106px;width:1px;height:22px;background:#ffffff;"></div><svg class="abs" style="left:204px;top:109px" width="16" height="16" viewBox="0 0 16 16"><defs><linearGradient id="fg" x1="0" y1="0" x2="0" y2="1"><stop offset="0" stop-color="#fff68c"/><stop offset=".45" stop-color="#fffad0"/><stop offset=".55" stop-color="#ffe000"/><stop offset="1" stop-color="#ffc400"/></linearGradient></defs><path d="M0.500 3.500V1.500H6.500L8 3.500z" fill="#ffee30" stroke="#94849c" stroke-width=".9"/><rect x="0.500" y="3.500" width="15" height="11.500" fill="url(#fg)" stroke="#94849c" stroke-width=".9"/><rect x="9.0" y="0.0" width="7" height="7" rx=".6" fill="#f08418"/><path d="M9.5 3.5h6M12.5 0.5v6M10.3 1.2999999999999998l4.400 4.400M14.7 1.2999999999999998l-4.400 4.400" stroke="#fff" stroke-width=".9"/><circle cx="12.5" cy="3.5" r="1.900" fill="#fff"/><circle cx="12.5" cy="3.5" r=".8" fill="#f08418"/></svg><svg class="abs" style="left:229px;top:109px" width="16" height="16" viewBox="0 0 16 16"><path d="M4 1.500h9.500v14h-12.500V4.500z" fill="#fcfcfc" stroke="#b8b8b8"/><path d="M1 4.500h3v-3" fill="none" stroke="#b8b8b8"/><rect x="7.0" y="3.0" width="7" height="7" rx=".6" fill="#f08418"/><path d="M7.5 6.5h6M10.5 3.5v6M8.3 4.3l4.400 4.400M12.7 4.3l-4.400 4.400" stroke="#fff" stroke-width=".9"/><circle cx="10.5" cy="6.5" r="1.900" fill="#fff"/><circle cx="10.5" cy="6.5" r=".8" fill="#f08418"/></svg><div class="abs" style="left:249px;top:106px;width:1px;height:22px;background:#a0a0a0;"></div><div class="abs" style="left:250px;top:106px;width:1px;height:22px;background:#ffffff;"></div><svg class="abs" style="left:256px;top:109px" width="16" height="16" viewBox="0 0 16 16"><path d="M2.500 2.500 13 13.500M13 2.500 2.500 13.500" stroke="#f04828" stroke-width="1.700"/></svg><div class="abs" style="left:278px;top:106px;width:1px;height:22px;background:#a0a0a0;"></div><div class="abs" style="left:279px;top:106px;width:1px;height:22px;background:#ffffff;"></div><svg class="abs" style="left:285px;top:109px" width="16" height="16" viewBox="0 0 16 16"><path d="M8 1.500 13.500 7.500H10V14.500H6V7.500H2.500z" fill="#0c5078"/></svg><svg class="abs" style="left:308px;top:109px" width="16" height="16" viewBox="0 0 16 16"><path d="M8 14.500 13.500 8.500H10V1.500H6V8.500H2.500z" fill="#0c5078"/></svg><div class="abs" style="left:330px;top:106px;width:1px;height:22px;background:#a0a0a0;"></div><div class="abs" style="left:331px;top:106px;width:1px;height:22px;background:#ffffff;"></div><svg class="abs" style="left:337px;top:109px" width="16" height="16" viewBox="0 0 16 16"><path d="M3.500 0.500h8l2 2v12h-10z" fill="#c8dcec" stroke="#9ab8d0" stroke-width=".8"/><rect x="1.500" y="9" width="5" height="3.500" rx="1" fill="#e8f0f4" stroke="#3a4a3a" stroke-width="1.100"/><rect x="9" y="9" width="5" height="3.500" rx="1" fill="#e8f0f4" stroke="#3a4a3a" stroke-width="1.100"/><path d="M6.500 10h2.500M14 9.500l1.500-1.500v3" fill="none" stroke="#3a4a3a" stroke-width="1"/></svg><div class="abs" style="left:3px;top:131px;width:63px;height:1px;background:#ffffff;"></div><div class="abs" style="left:2px;top:132px;width:1px;height:19px;background:#ffffff;"></div><div class="abs" style="left:66px;top:132px;width:1px;height:19px;background:#a0a0a0;"></div><div class="abs" style="left:67px;top:132px;width:1px;height:19px;background:#696969;"></div><span class="abs tree" style="left:9.5px;top:132px;letter-spacing:-0.207px;">Структура</span><div class="abs" style="left:68px;top:150px;width:561px;height:1px;background:#ffffff;"></div><div class="abs" style="left:2px;top:150px;width:1px;height:935px;background:#ffffff;"></div><div class="abs" style="left:629px;top:150px;width:1px;height:937px;background:#696969;"></div><div class="abs" style="left:628px;top:151px;width:1px;height:935px;background:#a0a0a0;"></div><div class="abs" style="left:2px;top:1086px;width:628px;height:1px;background:#696969;"></div><div class="abs" style="left:3px;top:1085px;width:626px;height:1px;background:#a0a0a0;"></div><div class="abs" style="left:5px;top:154px;width:619px;height:927px;background:#fff;border:1px solid;border-color:#a0a0a0 #fff #fff #a0a0a0;box-shadow:inset 1px 1px 0 #696969, inset -1px -1px 0 #e3e3e3;"></div><div class="abs" id="tree" style="left:7px;top:156px;width:617px;height:908px;overflow:hidden;"><div class="abs dv" style="left:27px;top:16px;height:168px"></div><div class="abs dv" style="left:46px;top:32px;height:104px"></div><div class="abs dv" style="left:46px;top:160px;height:8px"></div><div class="abs dv" style="left:46px;top:192px;height:24px"></div><div class="abs dv" style="left:65px;top:224px;height:169px"></div><div class="abs dh" style="left:14px;top:8px;width:5px"></div><svg class="abs" style="left:4px;top:4px" width="9" height="9" viewBox="0 0 9 9"><rect x=".5" y=".5" width="8" height="8" fill="#fff" stroke="#848484"/><path d="M2 4.500h5" stroke="#000"/></svg><svg class="abs" style="left:19px;top:0px" width="16" height="16" viewBox="0 0 16 16"><path d="M0.300 10.300 4 8.300 10 10.800 16.200 8v2.600L7.500 14.800 0.300 12.300z" fill="#fdfdff"/><path d="M0.300 10.300 7.300 12.600 16.200 8M0.300 10.300v2L7.500 14.800 16.200 10.600V8" fill="none" stroke="#38a0ec" stroke-width="1"/><path d="M8 13.500 16 9.700" stroke="#d8b8c8" stroke-width=".9"/>
<path d="M2.500 5.200 9.500 2.600 16 4.800 9 8z" fill="#2244d4"/><path d="M2.500 5.200 9 8 16 4.800V7.200L9 10.500 2.500 7.600z" fill="#fff"/><path d="M2.500 5.200V7.600L9 10.500 16 7.200" fill="none" stroke="#2850d0" stroke-width=".9"/><path d="M9.500 9.600 16 6.500" stroke="#d8b8c8" stroke-width=".8"/></svg><span class="abs tree" style="left:39px;top:0px;transform:scaleX(0.9206)">ЭСН и методики</span><div class="abs dh" style="left:33px;top:24px;width:5px"></div><svg class="abs" style="left:23px;top:20px" width="9" height="9" viewBox="0 0 9 9"><rect x=".5" y=".5" width="8" height="8" fill="#fff" stroke="#848484"/><path d="M2 4.500h5" stroke="#000"/></svg><svg class="abs" style="left:38px;top:16px" width="16" height="16" viewBox="0 0 16 16"><path d="M0.500 3.500V1.500H6.500L7.500 3.500" fill="#ffc830" stroke="#9c9cb4" stroke-width="1"/><rect x="0.500" y="3.500" width="15" height="11" fill="url(#tf)" stroke="#9898b0" stroke-width="1"/></svg><span class="abs tree" style="left:59px;top:16px;transform:scaleX(0.9174)">Технические части</span><div class="abs dh" style="left:52px;top:40px;width:5px"></div><svg class="abs" style="left:42px;top:36px" width="9" height="9" viewBox="0 0 9 9"><rect x=".5" y=".5" width="8" height="8" fill="#fff" stroke="#848484"/><path d="M2 4.500h5" stroke="#000"/><path d="M4.500 2v5" stroke="#000"/></svg><svg class="abs" style="left:57px;top:32px" width="16" height="16" viewBox="0 0 16 16"><path d="M0.500 3.500V1.500H6.500L7.500 3.500" fill="#ffc830" stroke="#9c9cb4" stroke-width="1"/><rect x="0.500" y="3.500" width="15" height="11" fill="url(#tf)" stroke="#9898b0" stroke-width="1"/></svg><span class="abs tree" style="left:79px;top:32px;transform:scaleX(0.8948)">ТСН-2001.12. Общие указания по применению ТСН-2001</span><div class="abs dh" style="left:52px;top:56px;width:5px"></div><svg class="abs" style="left:42px;top:52px" width="9" height="9" viewBox="0 0 9 9"><rect x=".5" y=".5" width="8" height="8" fill="#fff" stroke="#848484"/><path d="M2 4.500h5" stroke="#000"/><path d="M4.500 2v5" stroke="#000"/></svg><svg class="abs" style="left:57px;top:48px" width="16" height="16" viewBox="0 0 16 16"><path d="M0.500 3.500V1.500H6.500L7.500 3.500" fill="#ffc830" stroke="#9c9cb4" stroke-width="1"/><rect x="0.500" y="3.500" width="15" height="11" fill="url(#tf)" stroke="#9898b0" stroke-width="1"/></svg><span class="abs tree" style="left:79px;top:48px;transform:scaleX(0.9081)">Территориальные сметные нормативы для Москвы ТСН-2001 (МГЭ)</span><div class="abs dh" style="left:52px;top:72px;width:5px"></div><svg class="abs" style="left:42px;top:68px" width="9" height="9" viewBox="0 0 9 9"><rect x=".5" y=".5" width="8" height="8" fill="#fff" stroke="#848484"/><path d="M2 4.500h5" stroke="#000"/><path d="M4.500 2v5" stroke="#000"/></svg><svg class="abs" style="left:57px;top:64px" width="16" height="16" viewBox="0 0 16 16"><path d="M0.500 3.500V1.500H6.500L7.500 3.500" fill="#ffc830" stroke="#9c9cb4" stroke-width="1"/><rect x="0.500" y="3.500" width="15" height="11" fill="url(#tf)" stroke="#9898b0" stroke-width="1"/></svg><span class="abs tree" style="left:79px;top:64px;transform:scaleX(0.9170)">СН-2012 Выпуск № 1. База данных "Сборник стоимостных нормативов по содержанию и эксплуатации зданий</span><div class="abs dh" style="left:52px;top:88px;width:5px"></div><svg class="abs" style="left:42px;top:84px" width="9" height="9" viewBox="0 0 9 9"><rect x=".5" y=".5" width="8" height="8" fill="#fff" stroke="#848484"/><path d="M2 4.500h5" stroke="#000"/><path d="M4.500 2v5" stroke="#000"/></svg><svg class="abs" style="left:57px;top:80px" width="16" height="16" viewBox="0 0 16 16"><path d="M0.500 3.500V1.500H6.500L7.500 3.500" fill="#ffc830" stroke="#9c9cb4" stroke-width="1"/><rect x="0.500" y="3.500" width="15" height="11" fill="url(#tf)" stroke="#9898b0" stroke-width="1"/></svg><span class="abs tree" style="left:79px;top:80px;transform:scaleX(0.9088)">ГОСУДАРСТВЕННЫЕ СМЕТНЫЕ НОРМАТИВЫ (ГЭСН, ФЕР) 2017</span><div class="abs dh" style="left:46px;top:104px;width:11px"></div><svg class="abs" style="left:57px;top:96px" width="16" height="16" viewBox="0 0 16 16"><path d="M0.500 3.500V1.500H6.500L7.500 3.500" fill="#ffc830" stroke="#9c9cb4" stroke-width="1"/><rect x="0.500" y="3.500" width="15" height="11" fill="url(#tf)" stroke="#9898b0" stroke-width="1"/></svg><span class="abs tree" style="left:79px;top:96px;transform:scaleX(0.9204)">Федеральная сметно-нормативная база ценообразования в строительстве ФСНБ-2001 (редакция 2014 г)</span><div class="abs dh" style="left:52px;top:120px;width:5px"></div><svg class="abs" style="left:42px;top:116px" width="9" height="9" viewBox="0 0 9 9"><rect x=".5" y=".5" width="8" height="8" fill="#fff" stroke="#848484"/><path d="M2 4.500h5" stroke="#000"/><path d="M4.500 2v5" stroke="#000"/></svg><svg class="abs" style="left:57px;top:112px" width="16" height="16" viewBox="0 0 16 16"><path d="M0.500 3.500V1.500H6.500L7.500 3.500" fill="#ffc830" stroke="#9c9cb4" stroke-width="1"/><rect x="0.500" y="3.500" width="15" height="11" fill="url(#tf)" stroke="#9898b0" stroke-width="1"/></svg><span class="abs tree" style="left:79px;top:112px;transform:scaleX(0.9144)">Нормативы 2001 года (редакция 2014г)</span><div class="abs dh" style="left:52px;top:136px;width:5px"></div><svg class="abs" style="left:42px;top:132px" width="9" height="9" viewBox="0 0 9 9"><rect x=".5" y=".5" width="8" height="8" fill="#fff" stroke="#848484"/><path d="M2 4.500h5" stroke="#000"/><path d="M4.500 2v5" stroke="#000"/></svg><svg class="abs" style="left:57px;top:128px" width="16" height="16" viewBox="0 0 16 16"><path d="M0.500 3.500V1.500H6.500L7.500 3.500" fill="#ffc830" stroke="#9c9cb4" stroke-width="1"/><rect x="0.500" y="3.500" width="15" height="11" fill="url(#tf)" stroke="#9898b0" stroke-width="1"/></svg><span class="abs tree" style="left:79px;top:128px;transform:scaleX(0.9073)">ФСНБ-2022</span><div class="abs dh" style="left:33px;top:152px;width:5px"></div><svg class="abs" style="left:23px;top:148px" width="9" height="9" viewBox="0 0 9 9"><rect x=".5" y=".5" width="8" height="8" fill="#fff" stroke="#848484"/><path d="M2 4.500h5" stroke="#000"/></svg><svg class="abs" style="left:38px;top:144px" width="16" height="16" viewBox="0 0 16 16"><path d="M0.500 3.500V1.500H6.500L7.500 3.500" fill="#ffc830" stroke="#9c9cb4" stroke-width="1"/><rect x="0.500" y="3.500" width="15" height="11" fill="url(#tf)" stroke="#9898b0" stroke-width="1"/></svg><span class="abs tree" style="left:59px;top:144px;transform:scaleX(0.9197)">Элементные сметные нормы</span><div class="abs dh" style="left:52px;top:168px;width:5px"></div><svg class="abs" style="left:42px;top:164px" width="9" height="9" viewBox="0 0 9 9"><rect x=".5" y=".5" width="8" height="8" fill="#fff" stroke="#848484"/><path d="M2 4.500h5" stroke="#000"/><path d="M4.500 2v5" stroke="#000"/></svg><svg class="abs" style="left:57px;top:160px" width="16" height="16" viewBox="0 0 16 16"><path d="M0.500 3.500V1.500H6.500L7.500 3.500" fill="#ffc830" stroke="#9c9cb4" stroke-width="1"/><rect x="0.500" y="3.500" width="15" height="11" fill="url(#tf)" stroke="#9898b0" stroke-width="1"/></svg><span class="abs tree" style="left:79px;top:160px;transform:scaleX(0.8402)">ГЭСН 2001</span><div class="abs dh" style="left:33px;top:184px;width:5px"></div><svg class="abs" style="left:23px;top:180px" width="9" height="9" viewBox="0 0 9 9"><rect x=".5" y=".5" width="8" height="8" fill="#fff" stroke="#848484"/><path d="M2 4.500h5" stroke="#000"/></svg><svg class="abs" style="left:38px;top:176px" width="16" height="16" viewBox="0 0 16 16"><path d="M0.500 3.500V1.500H6.500L7.500 3.500" fill="#ffc830" stroke="#9c9cb4" stroke-width="1"/><rect x="0.500" y="3.500" width="15" height="11" fill="url(#tf)" stroke="#9898b0" stroke-width="1"/></svg><span class="abs tree" style="left:59px;top:176px;transform:scaleX(0.9055)">Методическая информация</span><div class="abs dh" style="left:52px;top:200px;width:5px"></div><svg class="abs" style="left:42px;top:196px" width="9" height="9" viewBox="0 0 9 9"><rect x=".5" y=".5" width="8" height="8" fill="#fff" stroke="#848484"/><path d="M2 4.500h5" stroke="#000"/><path d="M4.500 2v5" stroke="#000"/></svg><svg class="abs" style="left:57px;top:192px" width="16" height="16" viewBox="0 0 16 16"><path d="M0.500 3.500V1.500H6.500L7.500 3.500" fill="#ffc830" stroke="#9c9cb4" stroke-width="1"/><rect x="0.500" y="3.500" width="15" height="11" fill="url(#tf)" stroke="#9898b0" stroke-width="1"/></svg><span class="abs tree" style="left:79px;top:192px;transform:scaleX(0.8981)">2001 г</span><div class="abs dh" style="left:52px;top:216px;width:5px"></div><svg class="abs" style="left:42px;top:212px" width="9" height="9" viewBox="0 0 9 9"><rect x=".5" y=".5" width="8" height="8" fill="#fff" stroke="#848484"/><path d="M2 4.500h5" stroke="#000"/></svg><svg class="abs" style="left:57px;top:208px" width="16" height="16" viewBox="0 0 16 16"><path d="M0.500 3.500V1.500H6.500L7.500 3.500" fill="#ffc830" stroke="#9c9cb4" stroke-width="1"/><rect x="0.500" y="3.500" width="15" height="11" fill="url(#tf)" stroke="#9898b0" stroke-width="1"/></svg><span class="abs tree" style="left:79px;top:208px;transform:scaleX(0.8981)">2017 г</span><div class="abs dh" style="left:65px;top:232px;width:11px"></div><svg class="abs" style="left:76px;top:224px" width="16" height="16" viewBox="0 0 16 16"><path d="M0 8.500 11 14 10.500 16 0 11z" fill="#eef4f2"/><path d="M0 9.800 10.800 15M0 8.500 11 14" stroke="#8c9894" stroke-width=".7" fill="none"/><path d="M16 3.500V5L10.500 16 11 14z" fill="#70807c"/>
<path d="M6.500 1 16 3.500 11 14 0 8.500z" fill="url(#tb)"/><path d="M8.500 3.200 13 4.400" stroke="#c4ece0" stroke-width="1.200"/></svg><span class="abs tree" style="left:97px;top:224px;transform:scaleX(0.9210)">Методика применения сметных норм</span><div class="abs dh" style="left:65px;top:248px;width:11px"></div><svg class="abs" style="left:76px;top:240px" width="16" height="16" viewBox="0 0 16 16"><path d="M0 8.500 11 14 10.500 16 0 11z" fill="#eef4f2"/><path d="M0 9.800 10.800 15M0 8.500 11 14" stroke="#8c9894" stroke-width=".7" fill="none"/><path d="M16 3.500V5L10.500 16 11 14z" fill="#70807c"/>
<path d="M6.500 1 16 3.500 11 14 0 8.500z" fill="url(#tb)"/><path d="M8.500 3.200 13 4.400" stroke="#c4ece0" stroke-width="1.200"/></svg><span class="abs tree" style="left:97px;top:240px;transform:scaleX(0.9168)">Методика применения сметных цен строительных ресурсов</span><div class="abs dh" style="left:65px;top:264px;width:11px"></div><svg class="abs" style="left:76px;top:256px" width="16" height="16" viewBox="0 0 16 16"><path d="M0 8.500 11 14 10.500 16 0 11z" fill="#eef4f2"/><path d="M0 9.800 10.800 15M0 8.500 11 14" stroke="#8c9894" stroke-width=".7" fill="none"/><path d="M16 3.500V5L10.500 16 11 14z" fill="#70807c"/>
<path d="M6.500 1 16 3.500 11 14 0 8.500z" fill="url(#tb)"/><path d="M8.500 3.200 13 4.400" stroke="#c4ece0" stroke-width="1.200"/></svg><span class="abs tree" style="left:97px;top:256px;transform:scaleX(0.9107)">Методические рекомендации по применению федеральных единичных расценок на строительные, специальные</span><div class="abs dh" style="left:65px;top:280px;width:11px"></div><svg class="abs" style="left:76px;top:272px" width="16" height="16" viewBox="0 0 16 16"><path d="M0 4h16v11.500H0z" fill="#5cb09c"/><path d="M0 13.500h16v2H0z" fill="#3c9480"/>
<path d="M1.500 2.500c2.200-1 4.300-.6 6.500 1V14.500c-2.200-1.400-4.300-1.600-6.500-.8z" fill="#fff" stroke="#9a9a9a" stroke-width=".6"/><path d="M14.500 2.500c-2.200-1-4.300-.6-6.500 1V14.500c2.200-1.400 4.300-1.600 6.500-.8z" fill="#fff" stroke="#9a9a9a" stroke-width=".6"/>
<path d="M3.500 2.300v11M6 3v11M10.500 3v11" stroke="#c8c8c8" stroke-width=".7"/><path d="M2.300 3.500v9" stroke="#c8f0e4" stroke-width="1"/></svg><div class="abs" style="left:95px;top:272px;width:325px;height:16px;background:#0078d7;outline:1px dotted #f0a050;outline-offset:-1px;"></div><span class="abs tree sel" style="left:97px;top:272px;transform:scaleX(0.9173)">Методика  определения цен на затраты труда в строительстве</span><div class="abs dh" style="left:65px;top:296px;width:11px"></div><svg class="abs" style="left:76px;top:288px" width="16" height="16" viewBox="0 0 16 16"><path d="M0 8.500 11 14 10.500 16 0 11z" fill="#eef4f2"/><path d="M0 9.800 10.800 15M0 8.500 11 14" stroke="#8c9894" stroke-width=".7" fill="none"/><path d="M16 3.500V5L10.500 16 11 14z" fill="#70807c"/>
<path d="M6.500 1 16 3.500 11 14 0 8.500z" fill="url(#tb)"/><path d="M8.500 3.200 13 4.400" stroke="#c4ece0" stroke-width="1.200"/></svg><span class="abs tree" style="left:97px;top:288px;transform:scaleX(0.9170)">Методика определения сметных цен на эксплуатацию машин и механизмов</span><div class="abs dh" style="left:65px;top:312px;width:11px"></div><svg class="abs" style="left:76px;top:304px" width="16" height="16" viewBox="0 0 16 16"><path d="M0 8.500 11 14 10.500 16 0 11z" fill="#eef4f2"/><path d="M0 9.800 10.800 15M0 8.500 11 14" stroke="#8c9894" stroke-width=".7" fill="none"/><path d="M16 3.500V5L10.500 16 11 14z" fill="#70807c"/>
<path d="M6.500 1 16 3.500 11 14 0 8.500z" fill="url(#tb)"/><path d="M8.500 3.200 13 4.400" stroke="#c4ece0" stroke-width="1.200"/></svg><span class="abs tree" style="left:97px;top:304px;transform:scaleX(0.9144)">Методика определения сметных цен на материалы, изделия, конструкции, оборудование и цен услуг</span><div class="abs dh" style="left:65px;top:328px;width:11px"></div><svg class="abs" style="left:76px;top:320px" width="16" height="16" viewBox="0 0 16 16"><path d="M0 8.500 11 14 10.500 16 0 11z" fill="#eef4f2"/><path d="M0 9.800 10.800 15M0 8.500 11 14" stroke="#8c9894" stroke-width=".7" fill="none"/><path d="M16 3.500V5L10.500 16 11 14z" fill="#70807c"/>
<path d="M6.500 1 16 3.500 11 14 0 8.500z" fill="url(#tb)"/><path d="M8.500 3.200 13 4.400" stroke="#c4ece0" stroke-width="1.200"/></svg><span class="abs tree" style="left:97px;top:320px;transform:scaleX(0.9219)">Методические рекомендации по разработке государственных элементных сметных норм на монтаж</span><div class="abs dh" style="left:65px;top:344px;width:11px"></div><svg class="abs" style="left:76px;top:336px" width="16" height="16" viewBox="0 0 16 16"><path d="M0 8.500 11 14 10.500 16 0 11z" fill="#eef4f2"/><path d="M0 9.800 10.800 15M0 8.500 11 14" stroke="#8c9894" stroke-width=".7" fill="none"/><path d="M16 3.500V5L10.500 16 11 14z" fill="#70807c"/>
<path d="M6.500 1 16 3.500 11 14 0 8.500z" fill="url(#tb)"/><path d="M8.500 3.200 13 4.400" stroke="#c4ece0" stroke-width="1.200"/></svg><span class="abs tree" style="left:97px;top:336px;transform:scaleX(0.9145)">Методические рекомендации по разработке государственных элементных сметных норм на строительные</span><div class="abs dh" style="left:65px;top:360px;width:11px"></div><svg class="abs" style="left:76px;top:352px" width="16" height="16" viewBox="0 0 16 16"><path d="M0 8.500 11 14 10.500 16 0 11z" fill="#eef4f2"/><path d="M0 9.800 10.800 15M0 8.500 11 14" stroke="#8c9894" stroke-width=".7" fill="none"/><path d="M16 3.500V5L10.500 16 11 14z" fill="#70807c"/>
<path d="M6.500 1 16 3.500 11 14 0 8.500z" fill="url(#tb)"/><path d="M8.500 3.200 13 4.400" stroke="#c4ece0" stroke-width="1.200"/></svg><span class="abs tree" style="left:97px;top:352px;transform:scaleX(0.9170)">Методические рекомендации по разработке единичных расценок на строительные, специальные строительные</span><div class="abs dh" style="left:65px;top:376px;width:11px"></div><svg class="abs" style="left:76px;top:368px" width="16" height="16" viewBox="0 0 16 16"><path d="M0 8.500 11 14 10.500 16 0 11z" fill="#eef4f2"/><path d="M0 9.800 10.800 15M0 8.500 11 14" stroke="#8c9894" stroke-width=".7" fill="none"/><path d="M16 3.500V5L10.500 16 11 14z" fill="#70807c"/>
<path d="M6.500 1 16 3.500 11 14 0 8.500z" fill="url(#tb)"/><path d="M8.500 3.200 13 4.400" stroke="#c4ece0" stroke-width="1.200"/></svg><span class="abs tree" style="left:97px;top:368px;transform:scaleX(0.9254)">Методические рекомендации по разработке индексов изменения сметной стоимости строительства</span><div class="abs dh" style="left:65px;top:392px;width:11px"></div><svg class="abs" style="left:76px;top:384px" width="16" height="16" viewBox="0 0 16 16"><path d="M0 8.500 11 14 10.500 16 0 11z" fill="#eef4f2"/><path d="M0 9.800 10.800 15M0 8.500 11 14" stroke="#8c9894" stroke-width=".7" fill="none"/><path d="M16 3.500V5L10.500 16 11 14z" fill="#70807c"/>
<path d="M6.500 1 16 3.500 11 14 0 8.500z" fill="url(#tb)"/><path d="M8.500 3.200 13 4.400" stroke="#c4ece0" stroke-width="1.200"/></svg><span class="abs tree" style="left:97px;top:384px;transform:scaleX(0.9198)">Методические рекомендации по разработке укрупненных нормативов цены строительства</span></div><div class="abs" style="left:7px;top:1065px;width:617px;height:16px;background:#f0f0f0;"></div><div class="abs" style="left:24px;top:1065px;width:315px;height:15px;background:#cdcdcd;"></div><svg class="abs" style="left:11px;top:1067px" width="9" height="12" viewBox="0 0 9 12"><path d="M6.800 2.300 2.500 5.800 6.800 9.300" fill="none" stroke="#404040" stroke-width="2"/></svg><svg class="abs" style="left:611px;top:1067px" width="9" height="12" viewBox="0 0 9 12"><path d="M2.200 2.300 6.500 5.800 2.200 9.300" fill="none" stroke="#404040" stroke-width="2"/></svg><svg class="abs" style="left:636px;top:133px" width="16" height="16" viewBox="0 0 16 16"><path d="M4 0.500h6l2 2V6H4z" fill="#dce8f8" stroke="#9ab0d0" stroke-width=".8"/><rect x="0.500" y="5.500" width="15" height="6.500" rx="1.500" fill="#6c6c6c"/><rect x="2.500" y="7" width="11" height="2" fill="#3a3a3a"/><rect x="3.500" y="10.500" width="9" height="4.500" fill="#fff" stroke="#9ab0d0" stroke-width=".8"/><circle cx="14" cy="9.500" r=".7" fill="#90e040"/></svg><div class="abs" style="left:658px;top:130px;width:1px;height:22px;background:#a0a0a0;"></div><div class="abs" style="left:659px;top:130px;width:1px;height:22px;background:#ffffff;"></div><svg class="abs" style="left:665px;top:133px" width="16" height="16" viewBox="0 0 16 16"><path d="M1.2 13.2 7 7.6 8.6 9.2 2.9 14.9a1.2 1.2 0 0 1-1.7-1.7z" fill="#e8761c" stroke="#c05a10" stroke-width=".6"/>
<circle cx="10.5" cy="5.7" r="4.3" fill="#eef2fc" stroke="#f0a878" stroke-width="1"/><circle cx="10.5" cy="5.7" r="3.100" fill="#a8bcf0"/><circle cx="10.200" cy="5" r="1.600" fill="#c4d2f6"/></svg><div class="abs" style="left:687px;top:130px;width:1px;height:22px;background:#a0a0a0;"></div><div class="abs" style="left:688px;top:130px;width:1px;height:22px;background:#ffffff;"></div><svg class="abs" style="left:694px;top:133px" width="16" height="16" viewBox="0 0 16 16"><path d="M1 1.500h6l2 2v8H1z" fill="#d6f0f0" stroke="#88bcbc" stroke-width=".9"/><path d="M7 4.500h6l2 2V15H7z" fill="#d6f0f0" stroke="#88bcbc" stroke-width=".9"/></svg><div class="abs" style="left:716px;top:130px;width:1px;height:22px;background:#a0a0a0;"></div><div class="abs" style="left:717px;top:130px;width:1px;height:22px;background:#ffffff;"></div><svg class="abs" style="left:723px;top:133px" width="16" height="16" viewBox="0 0 16 16"><path d="M0.300 8 7.300 0.300 10.300 3.300 7.800 6H15.800v4H7.800l2.500 2.700-3 3z" fill="#8c8c8c"/></svg><svg class="abs" style="left:746px;top:133px" width="16" height="16" viewBox="0 0 16 16"><path d="M15.700 8 8.700 0.300 5.700 3.300 8.200 6H0.200v4H8.200L5.700 12.700l3 3z" fill="#8c8c8c"/></svg><div class="abs" style="left:639px;top:158px;width:1113px;height:921px;background:#fff;border:1px solid;border-color:#a0a0a0 #fff #fff #a0a0a0;box-shadow:inset 1px 1px 0 #696969, inset -1px -1px 0 #e3e3e3;"></div><div class="abs" id="doc" style="left:641px;top:160px;width:1094px;height:918px;overflow:hidden;background:#fff;"><div id="body"><p class="r"><span class="ln">Приложение</span><span class="ln">к приказу Министерства строительства и</span><span class="ln">жилищно-коммунального хозяйства</span><span class="ln">Российской Федерации</span><span class="ln">от 20 декабря 2016 г. № 1000/пр</span></p>
<p class="t"><span class="ln">Методика</span><span class="ln">определения сметных цен на затраты труда</span><span class="ln">в строительстве</span></p>
<p class="h"><span class="ln" style="letter-spacing:-0.1243px">1. ОБЛАСТЬ ПРИМЕНЕНИЯ</span></p>
<p><span class="ln" style="letter-spacing:-0.0095px">1.1. Настоящая Методика определения сметных цен на затраты труда в строительстве (далее – Методика) разработана в соответствии с частью 6 статьи 83</span><span class="ln" style="letter-spacing:0.0146px">Градостроительного кодекса Российской Федерации и Порядком мониторинга цен строительных ресурсов, утверждаемым Правительством Российской</span><span class="ln" style="letter-spacing:0.0437px">Федерации.</span></p>
<p><span class="ln" style="letter-spacing:0.0404px">1.2. Сметные цены на затраты труда в строительстве, определяемые в соответствии с настоящей Методикой, применяются в обязательном порядке при</span><span class="ln" style="letter-spacing:0.0064px">определении сметной стоимости строительства, реконструкции и капитального ремонта объектов капитального строительства, финансируемых с</span><span class="ln" style="letter-spacing:0.0596px">привлечением средств бюджетов бюджетной системы Российской Федерации, средств юридических лиц, созданных Российской Федерацией, субъектами</span><span class="ln" style="letter-spacing:0.0188px">Российской Федерации, муниципальными образованиями, юридических лиц, доля в уставных (складочных) капиталах которых Российской Федерации,</span><span class="ln" style="letter-spacing:0.0323px">субъектов Российской Федерации, муниципальных образований составляет более 50 процентов, а также сметной стоимости капитального ремонта</span><span class="ln" style="letter-spacing:0.0048px">многоквартирного дома, осуществляемого полностью или частично за счет средств регионального оператора, товарищества собственников жилья,</span><span class="ln" style="letter-spacing:0.0727px">жилищного, жилищно-строительного кооператива или иного специализированного потребительского кооператива, либо средств собственников</span><span class="ln" style="letter-spacing:0.0287px">помещений в многоквартирном доме и в иных случаях, установленных законодательством Российской Федерации.</span></p>
<p><span class="ln" style="letter-spacing:0.0747px">1.3. Сметные цены на затраты труда в строительстве предназначены для разработки и актуализации нормативов цены строительства и нормативов цены</span><span class="ln" style="letter-spacing:0.0014px">конструктивных решений в соответствующем уровне цен, составления сметной документации, разработки индексов изменения сметной стоимости</span><span class="ln" style="letter-spacing:-0.0124px">строительных, специальных строительных, ремонтно- строительных, монтажных и пусконаладочных работ (далее – строительные работы).</span></p>
<p class="h"><span class="ln" style="letter-spacing:-0.1771px">2. ТЕРМИНЫ, ОПРЕДЕЛЕНИЯ И СОКРАЩЕНИЯ</span></p>
<p><span class="ln" style="letter-spacing:-0.0564px">В настоящей Методике используются следующие термины, их определения и сокращения:</span></p>
<p><span class="ln" style="letter-spacing:0.0294px"><b style="letter-spacing:0.2431px">вахтовый метод:</b> особая форма организации трудового процесса вне места постоянного проживания работников, когда не может быть обеспечено</span><span class="ln" style="letter-spacing:-0.0055px">ежедневное их возвращение к месту постоянного проживания;</span></p>
<p><span class="ln" style="letter-spacing:0.0246px"><b style="letter-spacing:0.1089px">вредные условия труда:</b> условия труда, при которых уровни воздействия вредных и (или) опасных производственных факторов превышают уровни,</span><span class="ln" style="letter-spacing:0.0548px">установленные нормативами (гигиеническими нормативами) условий труда;</span></p>
<p><span class="ln" style="letter-spacing:0.0287px"><b style="letter-spacing:-0.0518px">заработная плата (оплата труда) работника:</b> вознаграждение за труд в зависимости от квалификации работника, сложности, количества, качества и</span><span class="ln" style="letter-spacing:0.0479px">условий выполняемой работы, а также компенсационные и стимулирующие выплаты;</span></p>
<p><span class="ln" style="letter-spacing:-0.0092px"><b style="letter-spacing:-0.1191px">квалификационный разряд:</b> показатель, отражающий уровень профессиональной подготовки работника;</span></p>
<p><span class="ln" style="letter-spacing:0.0314px"><b style="letter-spacing:-0.0496px">квалификация работника:</b> уровень знаний, умений, профессиональных навыков и опыта работы работника;</span></p>
<p><span class="ln" style="letter-spacing:0.0636px"><b style="letter-spacing:0.0263px">коллективный договор:</b> правовой акт, регулирующий социально-трудовые отношения в организации или у индивидуального предпринимателя и</span><span class="ln">заключаемый работниками и работодателем в лице их представителей;</span></p>
</div></div><div class="abs" style="left:1735px;top:160px;width:17px;height:919px;background:#f0f0f0;"></div><div class="abs" style="left:1736px;top:194px;width:15px;height:120px;background:#cdcdcd;"></div><svg class="abs" style="left:1737px;top:176px" width="13" height="10" viewBox="0 0 13 10"><path d="M1.500 8.500 6.500 3 11.500 8.500" fill="none" stroke="#505050" stroke-width="2.600"/></svg><svg class="abs" style="left:1737px;top:1052px" width="13" height="10" viewBox="0 0 13 10"><path d="M1.500 1.500 6.500 7 11.500 1.500" fill="none" stroke="#505050" stroke-width="2.600"/></svg><div class="abs" style="left:4px;top:1090px;width:85px;height:26px;border-top:1px solid #a0a0a0;border-left:1px solid #a0a0a0;border-right:1px solid #fff;border-bottom:1px solid #fff;box-sizing:border-box"></div><div class="abs" style="left:93px;top:1090px;width:296px;height:26px;border-top:1px solid #a0a0a0;border-left:1px solid #a0a0a0;border-right:1px solid #fff;border-bottom:1px solid #fff;box-sizing:border-box"></div><div class="abs" style="left:393px;top:1090px;width:1296px;height:26px;border-top:1px solid #a0a0a0;border-left:1px solid #a0a0a0;border-right:1px solid #fff;border-bottom:1px solid #fff;box-sizing:border-box"></div><div class="abs" style="left:1693px;top:1090px;width:30px;height:26px;border-top:1px solid #a0a0a0;border-left:1px solid #a0a0a0;border-right:1px solid #fff;border-bottom:1px solid #fff;box-sizing:border-box"></div><div class="abs" style="left:1727px;top:1090px;width:30px;height:26px;border-top:1px solid #a0a0a0;border-left:1px solid #a0a0a0;border-right:1px solid #fff;border-bottom:1px solid #fff;box-sizing:border-box"></div><div class="abs" style="left:1px;top:1087px;width:1759px;height:1px;background:#ffffff;"></div><div class="abs" style="left:1px;top:1088px;width:1759px;height:1px;background:#ffffff;"></div><div class="abs" style="left:89px;top:1088px;width:1px;height:29px;background:#ffffff;"></div><div class="abs" style="left:90px;top:1088px;width:1px;height:29px;background:#a0a0a0;"></div><div class="abs" style="left:389px;top:1088px;width:1px;height:29px;background:#ffffff;"></div><div class="abs" style="left:390px;top:1088px;width:1px;height:29px;background:#a0a0a0;"></div><div class="abs" style="left:1689px;top:1088px;width:1px;height:29px;background:#ffffff;"></div><div class="abs" style="left:1690px;top:1088px;width:1px;height:29px;background:#a0a0a0;"></div><div class="abs" style="left:1723px;top:1088px;width:1px;height:29px;background:#ffffff;"></div><div class="abs" style="left:1724px;top:1088px;width:1px;height:29px;background:#a0a0a0;"></div><div class="abs" style="left:1757px;top:1088px;width:1px;height:29px;background:#ffffff;"></div><div class="abs" style="left:1758px;top:1088px;width:1px;height:29px;background:#a0a0a0;"></div><svg class="abs" style="left:1700px;top:1095px" width="16" height="16" viewBox="0 0 16 16"><rect x="0.500" y="0.500" width="15" height="15" rx="5.500" fill="#9a9a9a"/><circle cx="8" cy="4.300" r="1.400" fill="#fff"/><rect x="6.800" y="7" width="2.400" height="6" fill="#fff"/><path d="M0.500 0.500 15.500 15" stroke="#f01020" stroke-width="1.700"/></svg><span class="abs ui" style="left:1734.3px;top:1095px;letter-spacing:-1.522px;">RU</span></body></html>
